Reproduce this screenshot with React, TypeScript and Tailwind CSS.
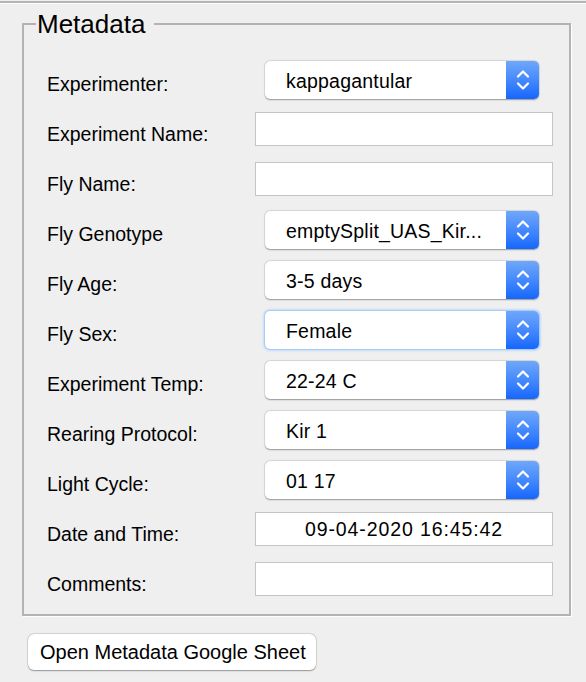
import React from "react";

const font = { fontFamily: '"Liberation Sans", Arial, sans-serif' };

function Chevrons() {
  return (
    <svg width="14" height="26" viewBox="0 0 14 26" fill="none">
      <path d="M2 9.5 L7 4.5 L12 9.5" stroke="white" strokeWidth="2.2" strokeLinecap="round" strokeLinejoin="round" />
      <path d="M2 16.5 L7 21.5 L12 16.5" stroke="white" strokeWidth="2.2" strokeLinecap="round" strokeLinejoin="round" />
    </svg>
  );
}

function Popup({ value, focused }: { value: string; focused?: boolean }) {
  return (
    <div
      className={
        "ml-[10px] mt-[5px] flex h-[38px] w-[274px] overflow-hidden rounded-[5px] bg-white " +
        (focused
          ? "shadow-[0_0_0_1px_#a9cdf7,0_0_2px_2px_#c4dcf8]"
          : "shadow-[0_0.5px_1.5px_rgba(0,0,0,0.35),0_0_0_0.5px_rgba(0,0,0,0.08)]")
      }
    >
      <div className="flex flex-1 items-center pl-[21px] pt-[3px] text-[19.5px] tracking-[0.2px] text-black">{value}</div>
      <div className="flex w-[33px] items-center justify-center bg-gradient-to-b from-[#6fa7f9] to-[#1466fe]">
        <Chevrons />
      </div>
    </div>
  );
}

function Field({ value }: { value?: string }) {
  return (
    <div className="mt-[6px] flex h-[34px] w-[298px] items-center justify-center border border-[#c4c4c4] bg-white pt-[2px] text-[19.5px] tracking-[0.9px] text-black">
      {value}
    </div>
  );
}

function Row({ label, children }: { label: string; children: React.ReactNode }) {
  return (
    <div className="flex h-[50px] items-start">
      <div className="mt-[17px] w-[208px] text-[19.5px] leading-[22px] text-black">{label}</div>
      {children}
    </div>
  );
}

export default function App() {
  return (
    <div className="h-[682px] w-[586px] overflow-hidden bg-[#efefef]" style={font}>
      <div className="pt-[1px]">
        <div className="h-[2px] bg-[#b5b5b5]" />
        <div className="h-[1px] bg-white" />
      </div>
      <fieldset className="ml-[22px] mr-[15px] mt-[5px] h-[607px] border-2 border-[#b3b3b3] shadow-[1px_1px_0_#ffffff]">
        <legend className="ml-[12px] pl-[1px] pr-[9px] text-[26px] leading-[30px] text-black">Metadata</legend>
        <div className="pl-[23px] pt-[17px]">
          <Row label="Experimenter:">
            <Popup value="kappagantular" />
          </Row>
          <Row label="Experiment Name:">
            <Field />
          </Row>
          <Row label="Fly Name:">
            <Field />
          </Row>
          <Row label="Fly Genotype">
            <Popup value="emptySplit_UAS_Kir..." />
          </Row>
          <Row label="Fly Age:">
            <Popup value="3-5 days" />
          </Row>
          <Row label="Fly Sex:">
            <Popup value="Female" focused />
          </Row>
          <Row label="Experiment Temp:">
            <Popup value="22-24 C" />
          </Row>
          <Row label="Rearing Protocol:">
            <Popup value="Kir 1" />
          </Row>
          <Row label="Light Cycle:">
            <Popup value="01 17" />
          </Row>
          <Row label="Date and Time:">
            <Field value="09-04-2020 16:45:42" />
          </Row>
          <Row label="Comments:">
            <Field />
          </Row>
        </div>
      </fieldset>
      <div className="pl-[28px] pt-[18px]">
        <button className="flex h-[36px] w-[288px] items-center rounded-[6px] bg-white pl-[12px] text-[20px] text-black shadow-[0_0.5px_1.5px_rgba(0,0,0,0.35),0_0_0_0.5px_rgba(0,0,0,0.1)]">
          Open Metadata Google Sheet
        </button>
      </div>
    </div>
  );
}
